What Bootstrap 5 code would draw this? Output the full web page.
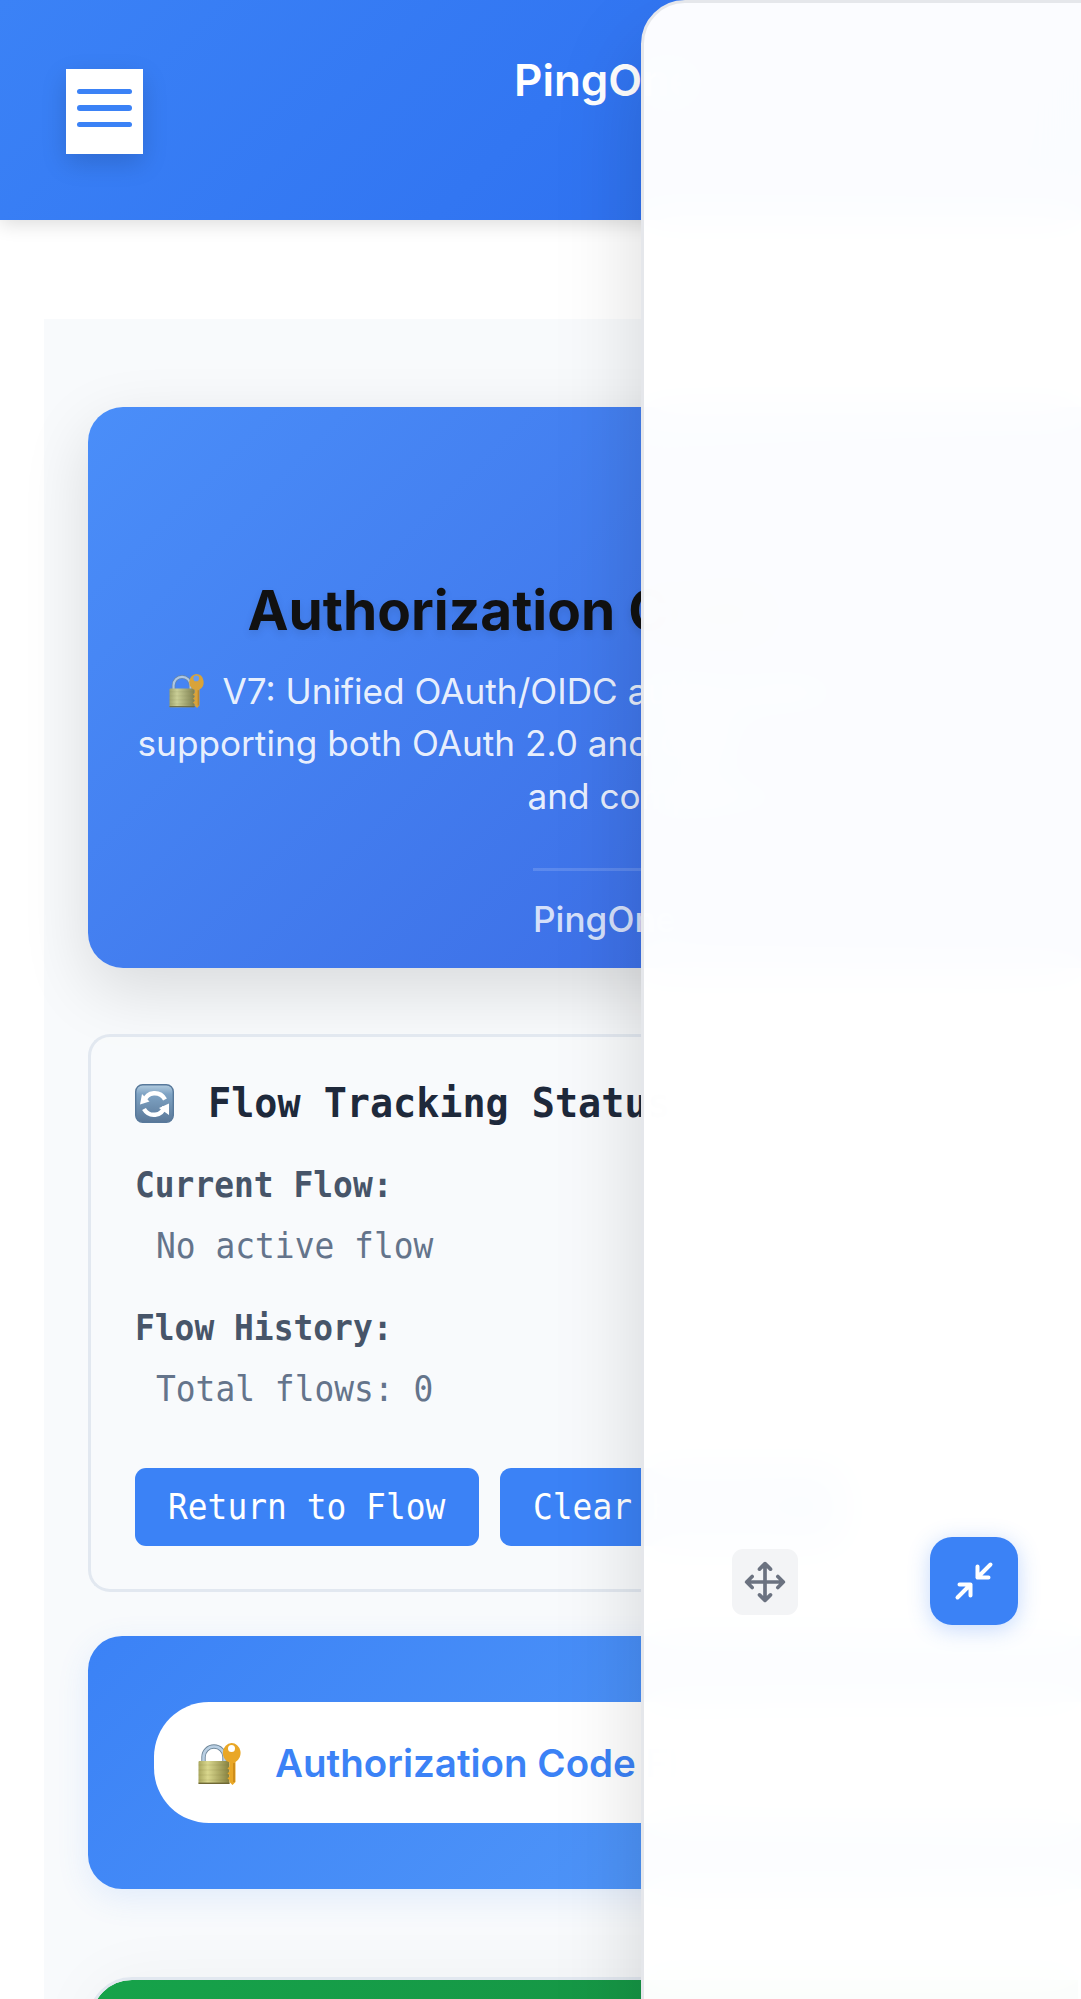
<!DOCTYPE html>
<html lang="en">
<head>
<meta charset="utf-8">
<meta name="viewport" content="width=device-width, initial-scale=1">
<title>PingOne Playground</title>
<link href="https://cdn.jsdelivr.net/npm/bootstrap@5.3.0/dist/css/bootstrap.min.css" rel="stylesheet">
<style>
body{font-family:Inter,"Liberation Sans",sans-serif;background:#fff;margin:0}
.stage{width:1081px;height:1999px}
.topbar{height:220px;padding-left:66px;background:linear-gradient(135deg,#3b82f6,#296aee);box-shadow:0 4px 18px rgba(0,0,0,.14);position:relative}
.menu-btn{width:77px;height:85.500px;margin-top:68.500px;padding:20px 11px 0;gap:11px;background:#fff;box-shadow:0 9px 26px rgba(0,0,0,.15)}
.menu-btn i{display:block;height:5.5px;border-radius:3px;background:#3b82f6}
.site-name{margin:53px 0 0 371px;font-size:44px;line-height:54px;font-weight:600;color:#fff}
.shell{margin:99px 0 0 44px;padding:88px 0 0 44px;background:#f8fafc;height:1680px}
.hero{height:561px;border-radius:35px 0 0 35px;background:linear-gradient(135deg,#4a8ef9,#3864e0);box-shadow:0 22px 66px rgba(0,0,0,.13);padding-top:169px}
.hero-title{font-size:55px;line-height:68px;font-weight:700;color:#111;margin:0 0 21px 159.500px;text-shadow:0 4px 9px rgba(0,0,0,.1)}
.hero-text{font-size:35.2px;line-height:52.3px;color:rgba(255,255,255,.9);padding-left:49.5px}
.line-a{padding-left:31.5px;gap:18.5px}
.line-c{padding-left:390px}
.hero-foot{margin:46px 0 0 445px;border-top:3px solid rgba(255,255,255,.15);padding-top:26px;font-size:35.2px;line-height:44px;font-weight:500;color:rgba(255,255,255,.8)}
.tracking{margin-top:66px;height:558px;border:3px solid #e2e8f0;border-right:0;border-radius:22px 0 0 22px;background:rgba(248,250,252,.6);padding:39px 0 0 44px;font-family:"DejaVu Sans Mono",monospace;font-size:35.2px}
.sq{display:inline-block;transform:scaleX(.935);transform-origin:0 50%}
.t-head{height:54px;gap:34px;font-size:41.1px;line-height:54px;font-weight:700;color:#1e293b}
.t-label{margin-top:24px;margin-bottom:3px;line-height:56px;font-weight:700;color:#475569}
.t-first{margin-top:27px}
.t-value{line-height:60px;color:#64748b;padding-left:21px}
.acts{margin-top:48.500px;gap:21px}
.act{height:78px;width:344px;border:0;border-radius:11px;background:#3b82f6;color:#fff;padding:0 0 0 33px;line-height:77px;text-align:left}
.step{margin-top:44px;height:253px;padding:66px 0 66px 66px;border-radius:34px 0 0 34px;background:linear-gradient(135deg,#3b82f6,#60a5fa);background-size:1300px 100%;box-shadow:0 9px 33px rgba(59,130,246,.12)}
.pill{height:121px;border-radius:55px 0 0 55px;background:#fff;padding:2px 0 0 44px;gap:34px;font-size:38.5px;font-weight:600;color:#3b82f6}
.green{margin-top:88px;height:300px;border:3px solid #e2e8f0;border-radius:44px 0 0 0;background:linear-gradient(135deg,#16a34a,#15863f) padding-box;box-shadow:0 0 66px rgba(0,0,0,.04)}
.float-panel{left:641px;top:0;width:520px;height:2200px;border:3px solid #e5e7eb;border-radius:44px 0 0 0;background:rgba(255,255,255,.98);backdrop-filter:blur(22px);box-shadow:0 44px 88px rgba(0,0,0,.15);z-index:5;padding:1534px 0 0 88px;gap:131.500px}
.grip{width:66px;height:66px;margin-top:11.5px;border-radius:11px;background:#f3f4f6}
.shrink-btn{width:88px;height:88px;border:0;padding:0;border-radius:22px;background:#3b82f6;box-shadow:0 4px 22px rgba(59,130,246,.3)}
</style>
<script src="https://cdn.jsdelivr.net/npm/bootstrap@5.3.0/dist/js/bootstrap.bundle.min.js"></script>
</head>
<body>
<svg width="0" height="0" class="position-absolute" aria-hidden="true">
<defs>
<linearGradient id="brass" x1="0" x2="1" y1="0" y2="0"><stop offset="0" stop-color="#aaa85f"/><stop offset=".3" stop-color="#d9d78d"/><stop offset="1" stop-color="#85803f"/></linearGradient>
<linearGradient id="steel" x1="0" x2="0" y1="0" y2="1"><stop offset="0" stop-color="#b4cde0"/><stop offset=".25" stop-color="#7fa3c4"/><stop offset="1" stop-color="#5a7898"/></linearGradient>
<symbol id="lock" viewBox="0 0 42 42">
<path d="M5 19v-5a10.500 10.500 0 0 1 21 0v5" fill="none" stroke="#6f8799" stroke-width="4.400"/>
<path d="M5 19v-5a10.500 10.500 0 0 1 21 0v5" fill="none" stroke="#b9cfe3" stroke-width="2.600"/>
<rect x="0" y="18" width="31" height="23" rx="1" fill="url(#brass)"/>
<path d="M0 22h31M0 27h31M0 32h31M0 37h31" stroke="#77733c" stroke-opacity=".15" stroke-width="1"/>
<path d="M0 40.300h31" stroke="#6f6836" stroke-width="1.400"/>
<path d="M33 0a9 10 0 0 1 4 19V39l-3 3-3-3V37l-2-1.500 2-2V32l-2-1.500 2-2V27l-2-1.500 2-2V19.500A9.500 10 0 0 1 33 0z" fill="#e9a726"/>
<path d="M35.500 20v19" stroke="#c07f14" stroke-width="1.300"/>
<circle cx="33" cy="5.500" r="3.500" fill="var(--hole,#fff)"/>
</symbol>
</defs>
</svg>
<div class="stage position-relative overflow-hidden">
  <header class="topbar d-flex align-items-start">
    <button class="menu-btn d-flex flex-column border-0" aria-label="Menu"><i class="w-100"></i><i class="w-100"></i><i class="w-100"></i></button>
    <div class="site-name text-nowrap">PingOne</div>
  </header>
  <main class="shell">
    <section class="hero">
      <h1 class="hero-title text-nowrap">Authorization Code</h1>
      <div class="hero-text text-nowrap">
        <div class="line-a d-flex align-items-center"><svg width="35" height="34" opacity=".9" style="--hole:#6aa0f5"><use href="#lock"/></svg><span>V7: Unified OAuth/OIDC authorization</span></div>
        <div>supporting both OAuth 2.0 and OIDC</div>
        <div class="line-c">and compliance</div>
      </div>
      <div class="hero-foot text-nowrap">PingOne</div>
    </section>
    <section class="tracking text-nowrap">
      <div class="t-head d-flex align-items-center">
        <svg width="39" height="39" viewBox="0 0 39 39"><rect x=".7" y=".7" width="37.600" height="37.600" rx="7" fill="url(#steel)" stroke="#58799b" stroke-width="1.400"/><path d="M9.500 17C12 7.500 25 6.500 30 15.500M29.500 22.500C27 32.500 14 33.500 9 25" fill="none" stroke="#fff" stroke-width="4.400"/><path d="M7 10 5 20.500l9.500-3zM34 19.500l0 11.500-10-7z" fill="#fff"/></svg>
        <span class="sq">Flow Tracking Status</span>
      </div>
      <div class="t-label t-first"><span class="sq">Current Flow:</span></div>
      <div class="t-value"><span class="sq">No active flow</span></div>
      <div class="t-label"><span class="sq">Flow History:</span></div>
      <div class="t-value"><span class="sq">Total flows: 0</span></div>
      <div class="acts d-flex">
        <button class="act flex-shrink-0"><span class="sq">Return to Flow</span></button>
        <button class="act flex-shrink-0"><span class="sq">Clear History</span></button>
      </div>
    </section>
    <section class="step">
      <div class="pill d-flex align-items-center text-nowrap"><svg width="43" height="42"><use href="#lock"/></svg><span>Authorization Code Flow</span></div>
    </section>
    <section class="green"></section>
  </main>
  <aside class="float-panel position-absolute d-flex align-items-start">
    <div class="grip d-flex align-items-center justify-content-center"><svg width="44" height="44" viewBox="0 0 24 24" fill="none" stroke="#6b7280" stroke-width="2" stroke-linecap="round" stroke-linejoin="round"><path d="M5 9l-3 3 3 3M9 5l3-3 3 3M15 19l-3 3-3-3M19 9l3 3-3 3M2 12h20M12 2v20"/></svg></div>
    <button class="shrink-btn d-flex align-items-center justify-content-center" aria-label="Collapse"><svg width="44" height="44" viewBox="0 0 44 44" fill="none" stroke="#fff" stroke-width="4" stroke-linecap="round" stroke-linejoin="round"><path d="M38.500 5.500 25.500 18.500M25.500 7.500v11h11M5.500 38.500l13-13M7.500 25.500h11v11"/></svg></button>
  </aside>
</div>
</body>
</html>
